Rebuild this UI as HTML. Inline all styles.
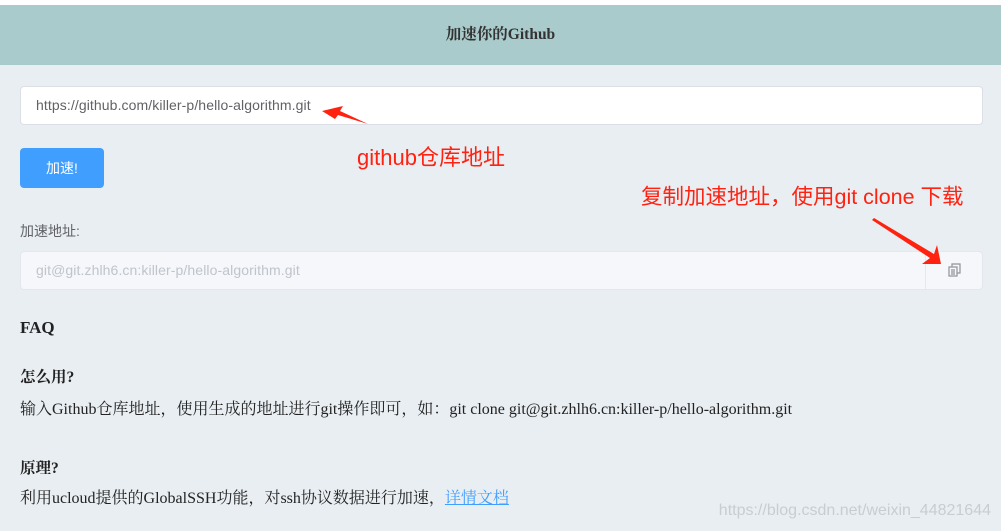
<!DOCTYPE html>
<html><head><meta charset="utf-8"><style>
body{margin:0;width:1001px;height:531px;overflow:hidden;background:#e9eef2;font-family:"Liberation Serif","Noto Serif CJK SC",serif;position:relative;color:#222}
.top{position:absolute;left:0;top:0;width:1001px;height:5px;background:#fff}
.hd{position:absolute;left:0;top:5px;width:1001px;height:60px;background:#aacbcc;text-align:center;line-height:60px;font-weight:bold;font-size:15.5px;color:#333}
.in{position:absolute;left:20px;width:961px;height:37px;border:1px solid #dcdfe6;border-radius:4px;background:#fff;box-sizing:content-box;font-family:"Liberation Sans","Noto Sans CJK SC",sans-serif;font-size:14px;line-height:37px;text-indent:15px;color:#606266;letter-spacing:0.1px}
.btn{position:absolute;left:20px;top:148px;width:84px;height:40px;background:#409eff;border-radius:4px;color:#fff;font-family:"Liberation Sans","Noto Sans CJK SC",sans-serif;font-size:14px;line-height:40px;text-align:center}
.red{position:absolute;color:#f21;font-family:"Liberation Sans","Noto Sans CJK SC",sans-serif;font-size:21.5px}
.t{position:absolute;left:20px}
</style></head><body>
<div class="top"></div>
<div class="hd">加速你的Github</div>
<div class="in" style="top:86px">https://github.com/killer-p/hello-algorithm.git</div>
<div class="btn">加速!</div>
<div class="t" style="top:221px;font-family:'Liberation Sans','Noto Sans CJK SC',sans-serif;font-size:14px;color:#606266">加速地址:</div>
<div class="in" style="top:251px;background:#f5f7fa;color:#c0c4cc;border-color:#e4e7ed">git@git.zhlh6.cn:killer-p/hello-algorithm.git</div>
<div style="position:absolute;left:925px;top:252px;width:56px;height:37px;border-left:1px solid #e4e7ed;background:#f5f7fa;border-radius:0 4px 4px 0"></div>
<svg style="position:absolute;left:948px;top:263px" width="14" height="14" viewBox="0 0 14 14" fill="none" stroke="#909399" stroke-width="1.2"><rect x="1" y="4" width="8" height="9"/><path d="M4 4V1h8v9H9"/><path d="M3 7h4M3 9h4M3 11h4"/></svg>
<div class="red" style="left:357px;top:140px;font-size:22px">github仓库地址</div>
<div class="red" style="left:641px;top:180px">复制加速地址，使用git clone 下载</div>
<svg style="position:absolute;left:0;top:0" width="1001" height="531"><polygon points="322,111 343,106 340,111 368,124 338,115 335,119" fill="#f21"/><polygon points="874,218 934,254 937,245 941,264 922,264 930,258 872,220" fill="#f21"/></svg>
<div class="t" style="top:318px;font-size:17px;font-weight:bold">FAQ</div>
<div class="t" style="top:365px;font-size:15.5px;font-weight:bold">怎么用?</div>
<div class="t" style="top:396px;font-size:16px">输入Github仓库地址，使用生成的地址进行git操作即可，如：git clone git@git.zhlh6.cn:killer-p/hello-algorithm.git</div>
<div class="t" style="top:456px;font-size:15.5px;font-weight:bold">原理?</div>
<div class="t" style="top:485px;font-size:16px">利用ucloud提供的GlobalSSH功能，对ssh协议数据进行加速，<span style="color:#409eff;text-decoration:underline">详情文档</span></div>
<div style="position:absolute;right:10px;top:502px;font-family:'Liberation Sans',sans-serif;font-size:16px;color:#c8cdd2">https://blog.csdn.net/weixin_44821644</div>
</body></html>
